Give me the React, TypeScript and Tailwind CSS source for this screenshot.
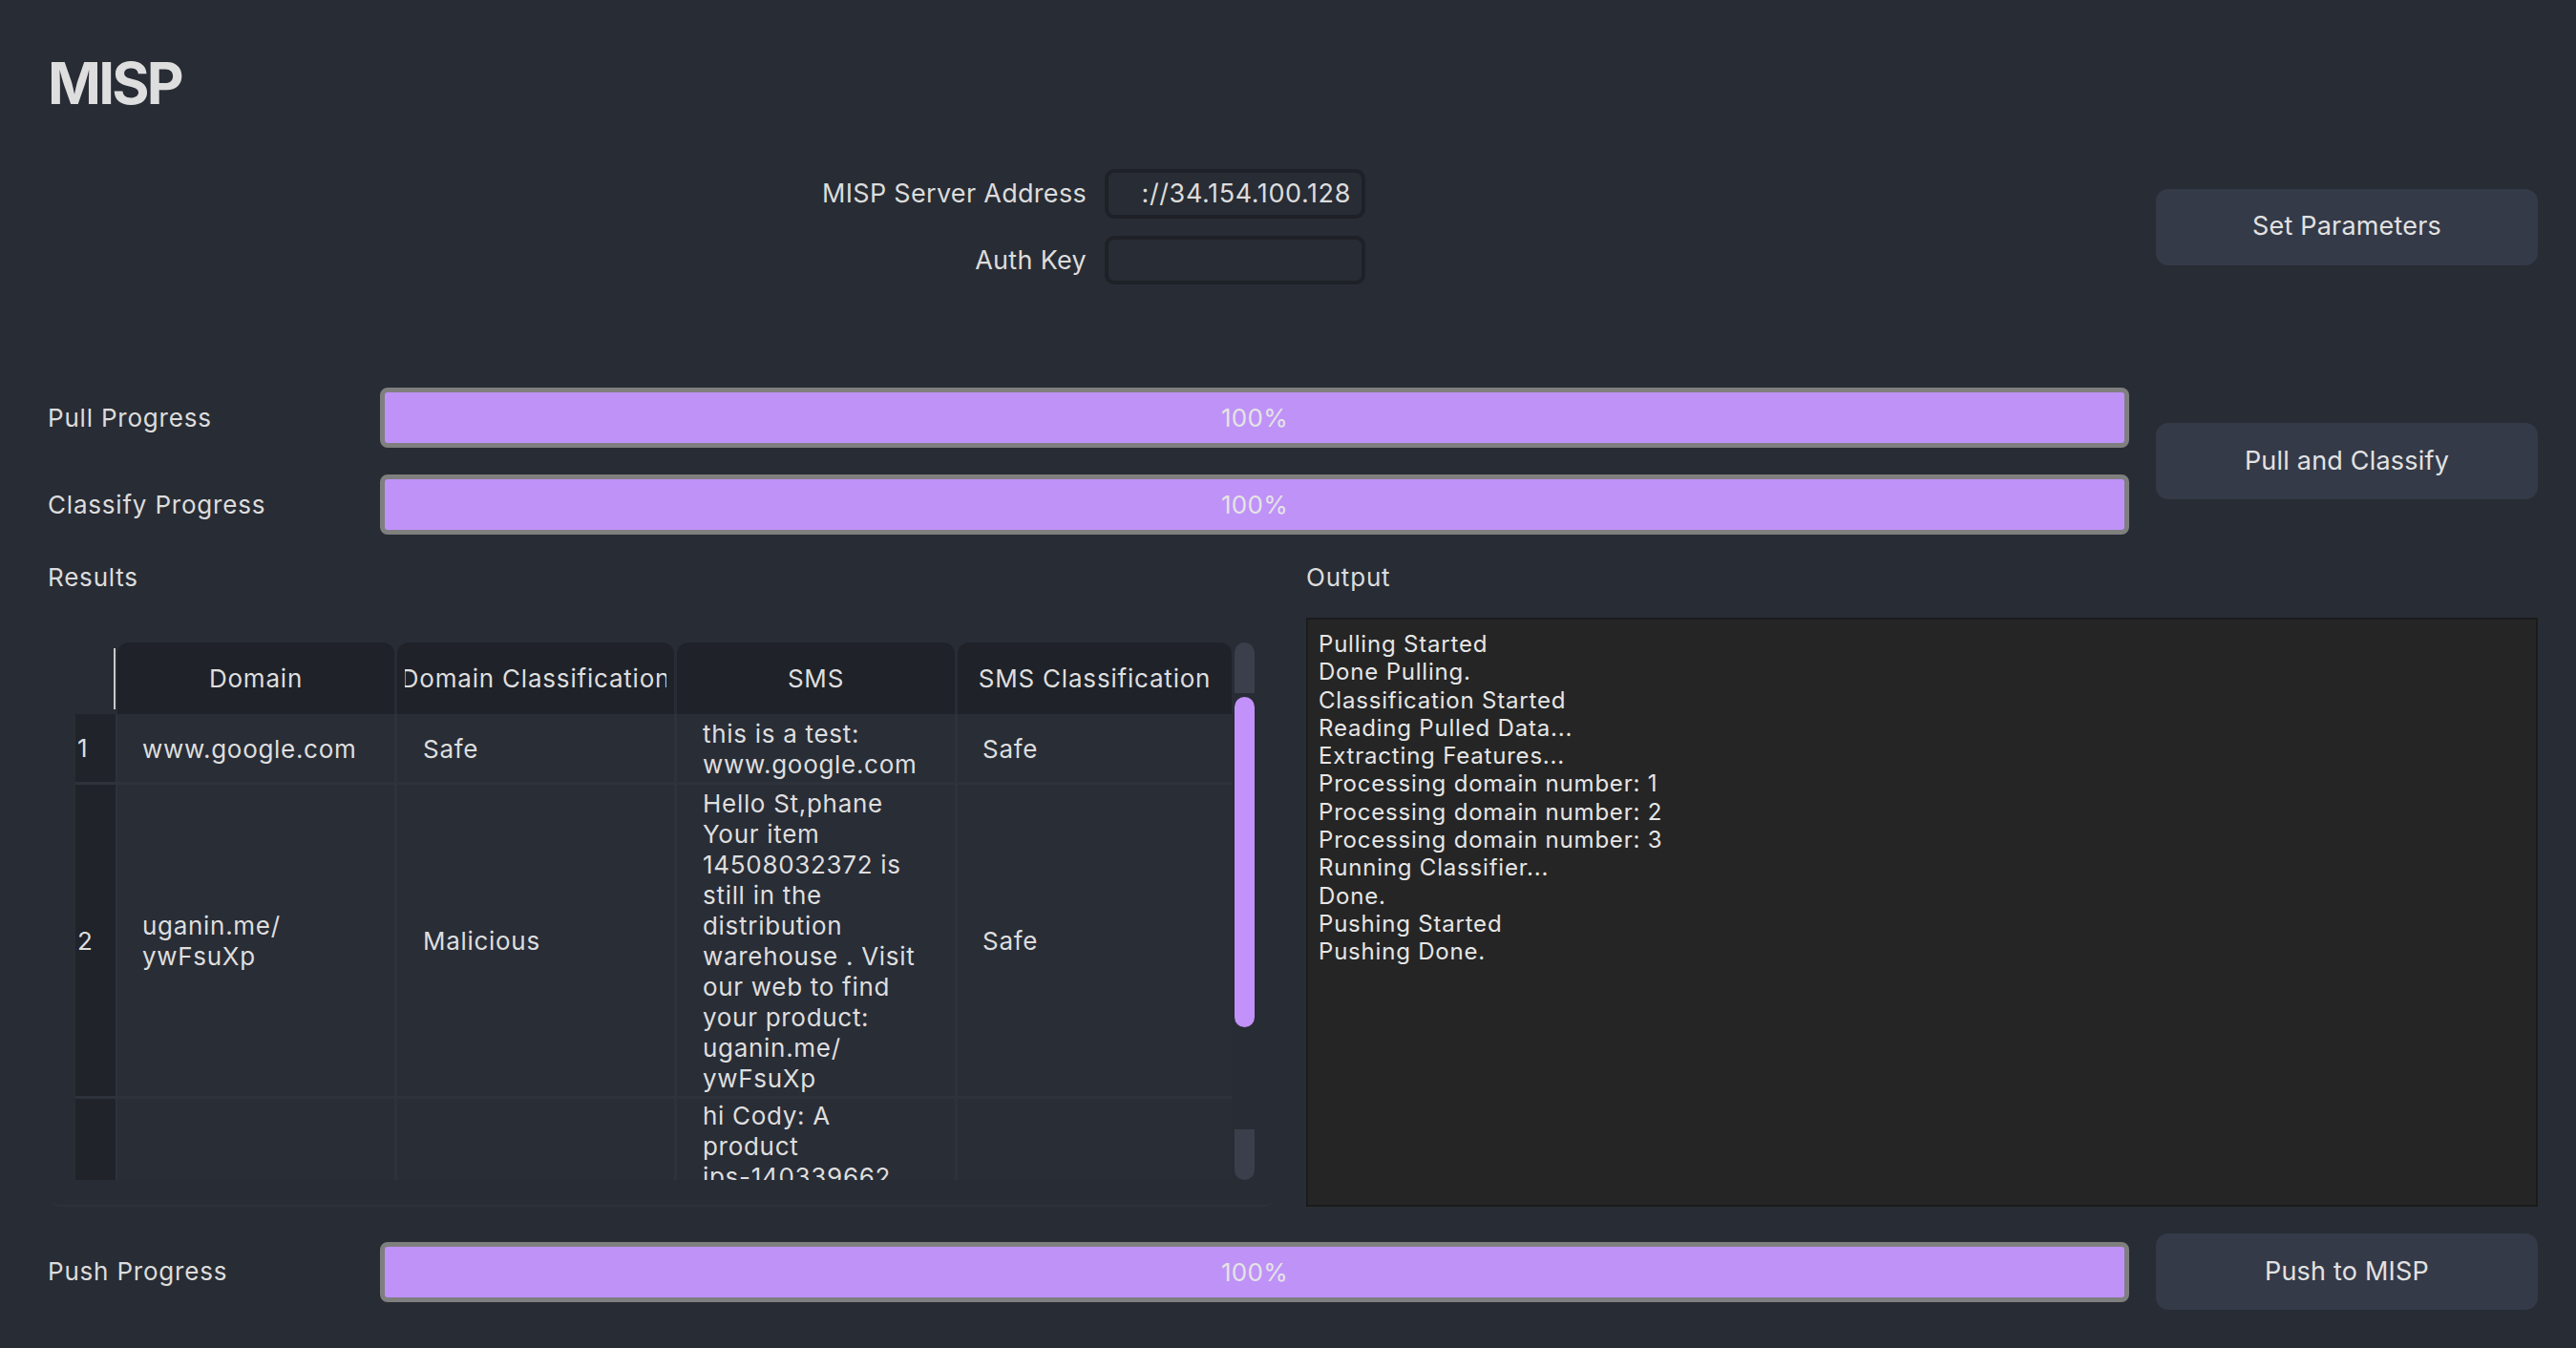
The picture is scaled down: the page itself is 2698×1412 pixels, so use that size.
// MISP panel - server params, progress bars, results table and output log

type Row = {
    num: string;
    domain: string[];
    domainClass: string;
    sms: string[];
    smsClass: string;
    height: string;
};

const rows: Row[] = [
    {
        num: '1',
        domain: ['www.google.com'],
        domainClass: 'Safe',
        sms: ['this is a test:', 'www.google.com'],
        smsClass: 'Safe',
        height: 'h-[71px]',
    },
    {
        num: '2',
        domain: ['uganin.me/', 'ywFsuXp'],
        domainClass: 'Malicious',
        sms: [
            'Hello St,phane',
            'Your item',
            '14508032372 is',
            'still in the',
            'distribution',
            'warehouse . Visit',
            'our web to find',
            'your product:',
            'uganin.me/',
            'ywFsuXp',
        ],
        smsClass: 'Safe',
        height: 'h-[326px]',
    },
    {
        num: '',
        domain: [],
        domainClass: '',
        sms: ['hi Cody: A', 'product', 'ips-140339662'],
        smsClass: '',
        height: 'h-[200px]',
    },
];

const outputLines = [
    'Pulling Started',
    'Done Pulling.',
    'Classification Started',
    'Reading Pulled Data...',
    'Extracting Features...',
    'Processing domain number: 1',
    'Processing domain number: 2',
    'Processing domain number: 3',
    'Running Classifier...',
    'Done.',
    'Pushing Started',
    'Pushing Done.',
];

const headers = [
    { label: 'Domain', w: 'w-[290px]' },
    { label: 'Domain Classification', w: 'w-[290px]' },
    { label: 'SMS', w: 'w-[291px]' },
    { label: 'SMS Classification', w: 'w-[287px]' },
];

function ActionButton({ label }: { label: string }) {
    return (
        <button className="w-[400px] h-[80px] shrink-0 rounded-[13px] bg-[#343a48] text-[27px] text-[#e2e2e2] tracking-[0.2px]">
            {label}
        </button>
    );
}

function ProgressRow({ label }: { label: string }) {
    return (
        <div className="flex items-center h-[63px]">
            <span className="w-[348px] shrink-0 text-[26px] leading-[32px] tracking-[0.8px]">{label}</span>
            <div className="flex-1 h-full rounded-[8px] border-[5px] border-[#7f7f7f] bg-[#bf92f8] flex items-center justify-center">
                <span className="text-[26px] text-[#e4e4e4] tracking-[0.3px]">100%</span>
            </div>
        </div>
    );
}

function Cell({ w, lines, pad = 'pl-[26px]', align = 'items-center' }: { w: string; lines: string[]; pad?: string; align?: string }) {
    return (
        <div className={`${w} shrink-0 h-full bg-[#292d36] flex ${align} ${pad} pt-[2px]`}>
            <div className="text-[26px] leading-[32px] tracking-[0.7px] text-[#dedede]">
                {lines.map((l, i) => (
                    <div key={i} className="whitespace-nowrap">{l}</div>
                ))}
            </div>
        </div>
    );
}

function ResultsTable() {
    return (
        <div className="flex h-[563px]">
            <div className="w-[1211px] flex flex-col">
                {/* header */}
                <div className="h-[75px] flex">
                    <div className="w-[42px] shrink-0 flex items-center justify-end">
                        <div className="w-[2px] h-[64px] bg-[#c9c9c9]" />
                    </div>
                    <div className="ml-[2px] flex gap-[3px]">
                        {headers.map(h => (
                            <div key={h.label} className={`${h.w} h-full rounded-t-[12px] bg-[#1f2229] flex items-center px-[8px]`}>
                                <div className="w-full overflow-hidden flex justify-center whitespace-nowrap text-[26px] tracking-[0.8px] text-[#dedede]">
                                    {h.label}
                                </div>
                            </div>
                        ))}
                    </div>
                </div>
                {/* body */}
                <div className="h-[488px] overflow-hidden flex flex-col gap-[3px] bg-[#2e323b]">
                    {rows.map((r, i) => (
                        <div key={i} className={`${r.height} shrink-0 flex gap-[3px]`}>
                            <div className="w-[42px] shrink-0 h-full bg-[#202329] flex items-center pl-[2px] text-[26px] text-[#dedede] -mr-[1px]">
                                {r.num}
                            </div>
                            <Cell w="w-[290px]" lines={r.domain} />
                            <Cell w="w-[290px]" lines={r.domainClass ? [r.domainClass] : []} pad="pl-[27px]" />
                            <Cell w="w-[291px]" lines={r.sms} pad="pl-[27px]" align={i === 2 ? 'items-start' : 'items-center'} />
                            <Cell w="w-[287px]" lines={r.smsClass ? [r.smsClass] : []} />
                        </div>
                    ))}
                </div>
            </div>
            {/* scrollbar */}
            <div className="ml-[3px] w-[21px] flex flex-col">
                <div className="h-[53px] rounded-t-full bg-[#3a3f4b]" />
                <div className="mt-[4px] h-[346px] rounded-full bg-[#c391fa]" />
                <div className="flex-1" />
                <div className="h-[53px] rounded-b-full bg-[#3a3f4b]" />
            </div>
        </div>
    );
}

export default function App() {
    return (
        <div className="min-h-[1412px] w-full bg-[#282c34] pl-[50px] pr-[40px] font-['Inter',sans-serif] text-[#dcdcdc]">
            <h1 className="pt-[57px] text-[60px] leading-[60px] font-bold text-[#dedede] tracking-[-2.75px]">MISP</h1>

            {/* server parameters */}
            <div className="mt-[60px] h-[121px] flex items-center gap-[28px]">
                <div className="flex-1">
                    <div className="ml-[788px] grid grid-cols-[300px_273px] gap-x-[19px] gap-y-[18px] items-center">
                        <span className="text-right text-[27px] leading-[32px] tracking-[0.3px]">MISP Server Address</span>
                        <div className="h-[52px] rounded-[10px] border-4 border-[#1e2127] flex items-center justify-end pr-[11px] text-[27px] tracking-[0.6px] whitespace-nowrap overflow-hidden">
                            ://34.154.100.128
                        </div>
                        <span className="text-right text-[27px] leading-[32px] tracking-[0.3px]">Auth Key</span>
                        <div className="h-[51px] rounded-[10px] border-4 border-[#1e2127]" />
                    </div>
                </div>
                <ActionButton label="Set Parameters" />
            </div>

            {/* pull / classify */}
            <div className="mt-[108px] flex items-center gap-[28px]">
                <div className="flex-1 flex flex-col gap-[28px]">
                    <ProgressRow label="Pull Progress" />
                    <ProgressRow label="Classify Progress" />
                </div>
                <ActionButton label="Pull and Classify" />
            </div>

            {/* results + output */}
            <div className="mt-[29px] grid grid-cols-[1285px_1fr] gap-[33px]">
                <div className="flex flex-col">
                    <span className="text-[26px] leading-[32px] tracking-[0.8px]">Results</span>
                    <div className="mt-[20px] ml-[2px] h-[623px] rounded-[10px] border-2 border-transparent border-b-[#2d313a] pt-[30px] pl-[25px]">
                        <ResultsTable />
                    </div>
                </div>
                <div className="flex flex-col">
                    <span className="text-[26px] leading-[32px] tracking-[0.8px]">Output</span>
                    <div className="mt-[26px] h-[617px] bg-[#252525] border-2 border-[#1b1b1b] pl-[11px] pt-[11px]">
                        {outputLines.map((l, i) => (
                            <div key={i} className="text-[24px] leading-[29.3px] tracking-[0.8px] text-[#e6e6e6]">{l}</div>
                        ))}
                    </div>
                </div>
            </div>

            {/* push */}
            <div className="mt-[28px] h-[80px] flex items-center gap-[28px]">
                <div className="flex-1">
                    <ProgressRow label="Push Progress" />
                </div>
                <ActionButton label="Push to MISP" />
            </div>
        </div>
    );
}
